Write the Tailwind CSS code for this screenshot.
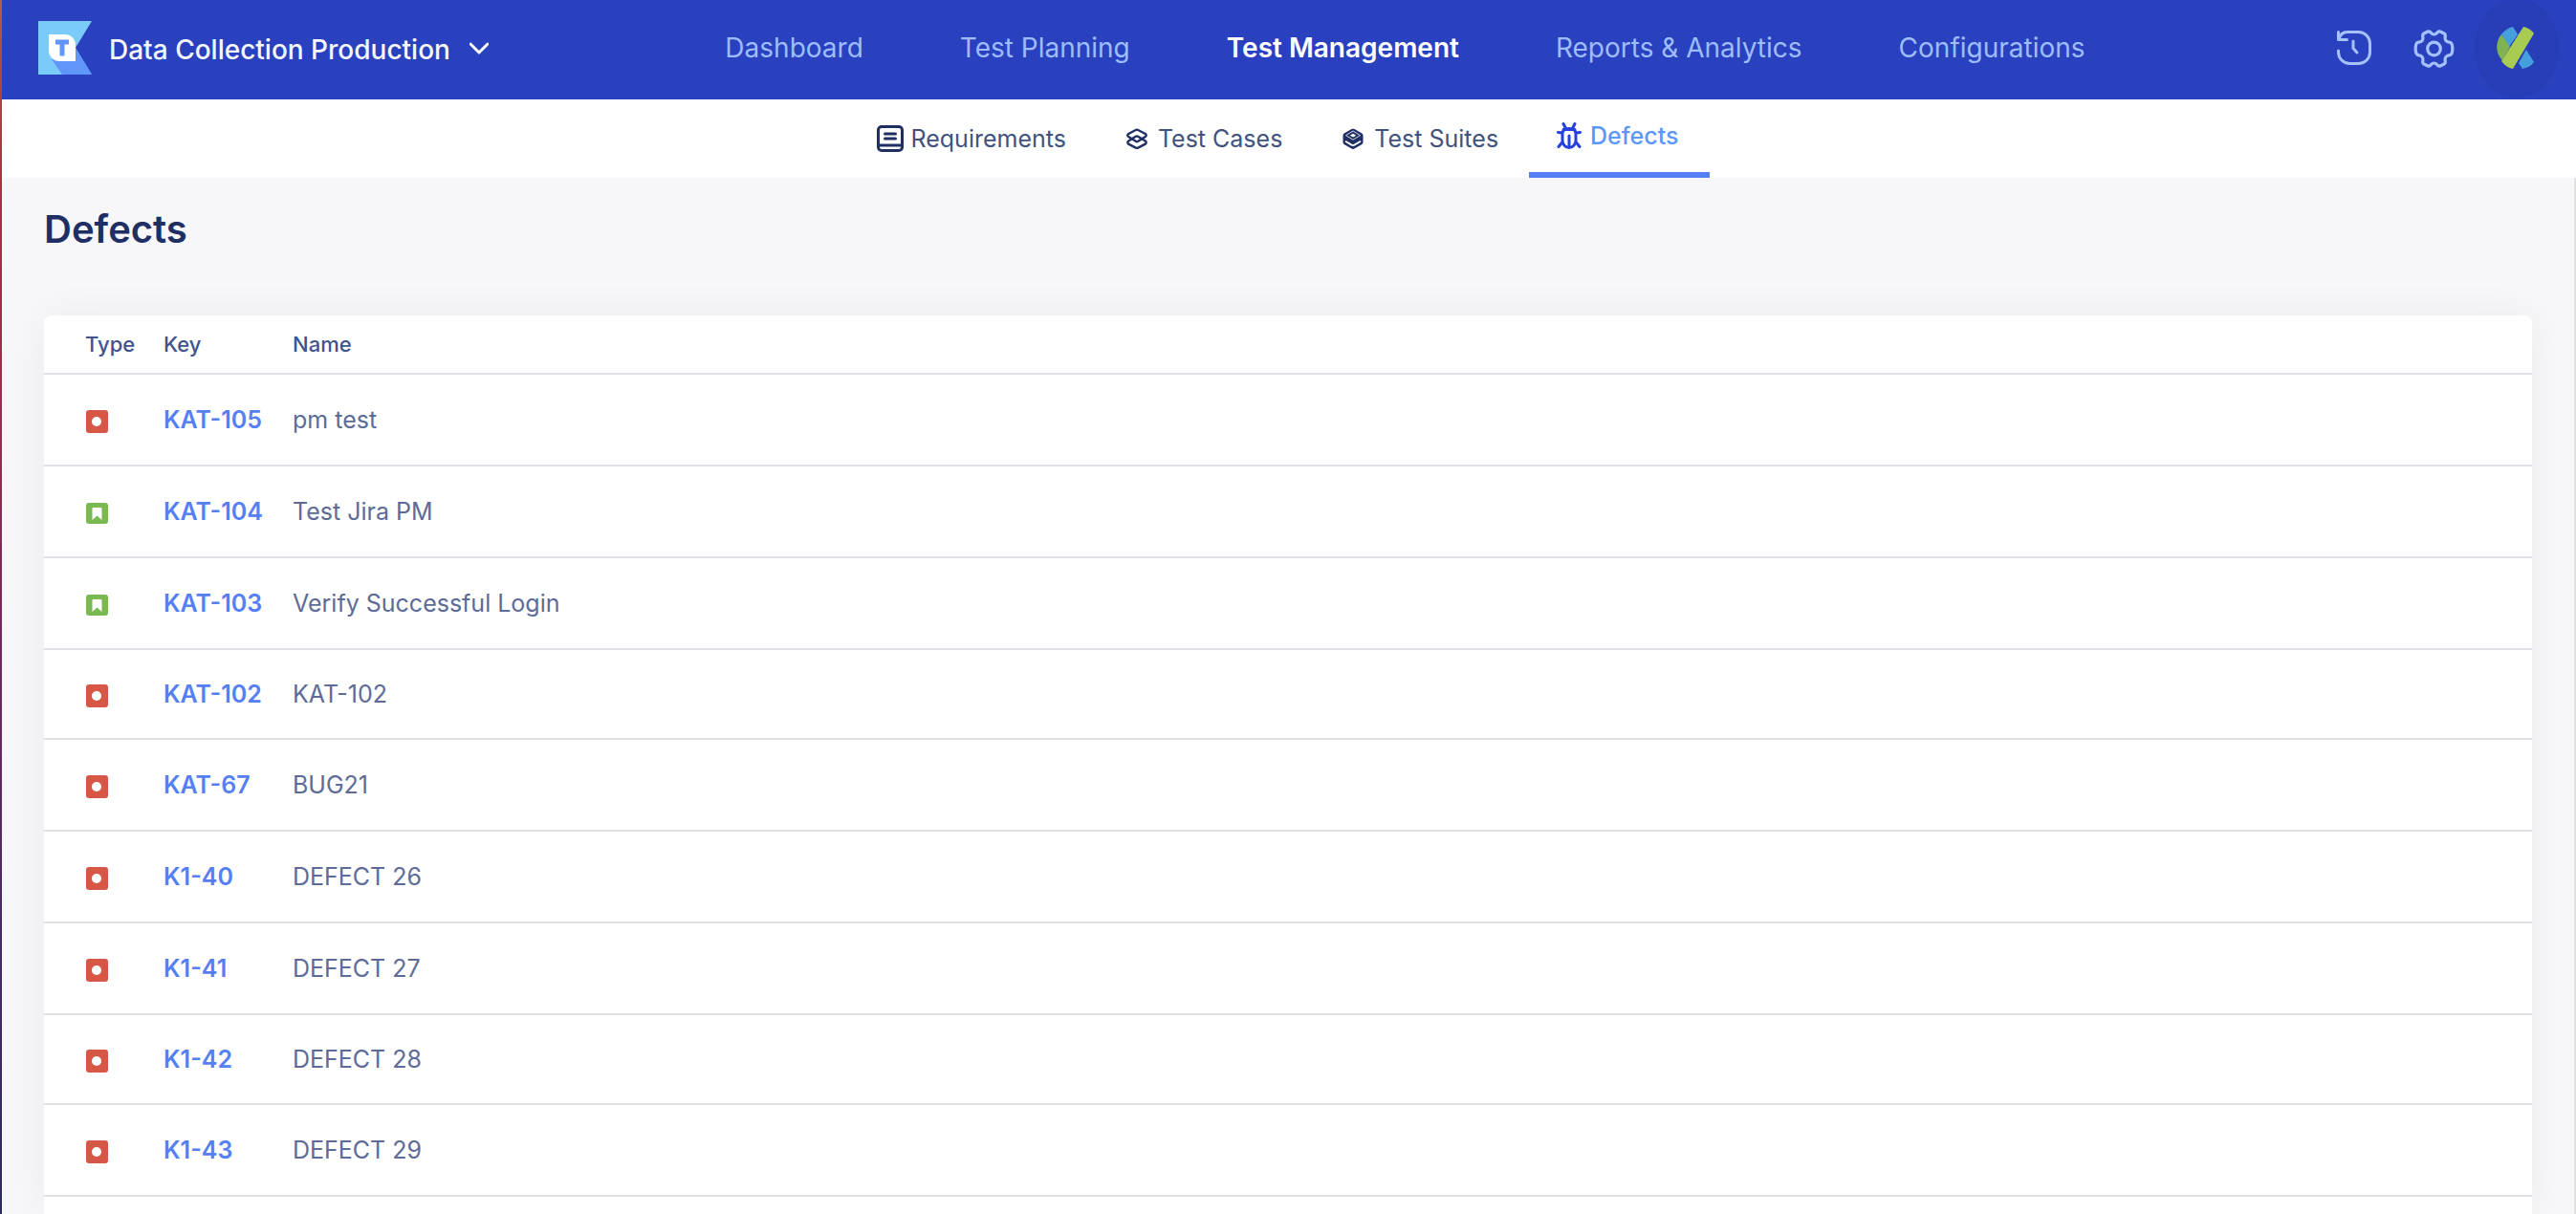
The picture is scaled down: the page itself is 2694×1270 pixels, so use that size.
<!DOCTYPE html>
<html lang="en">
<head>
<meta charset="utf-8">
<meta name="viewport" content="width=device-width, initial-scale=1">
<title>Defects</title>
<script src="https://cdn.jsdelivr.net/npm/@tailwindcss/browser@4"></script>
</head>
<body class="flex min-h-screen bg-[#f7f7fa] font-['Inter',sans-serif] antialiased">
<svg class="hidden" aria-hidden="true">
  <symbol id="bug" viewBox="0 0 24 24"><rect x="1" y="0" width="23" height="24" rx="3" fill="#d65745"/><circle cx="12" cy="12" r="5" fill="#fff"/></symbol>
  <symbol id="story" viewBox="0 0 24 24"><rect x="1" y="1" width="23" height="22" rx="3" fill="#7ab950"/><path d="M8.500 6h8a1 1 0 0 1 1 1v12l-5-4.500-5 4.500V7a1 1 0 0 1 1-1z" fill="#fff"/></symbol>
</svg>
<div class="w-[2px] shrink-0 bg-[linear-gradient(to_bottom,#b85a48_0%,#b04040_8%,#b32648_18%,#a02850_35%,#6f2a5c_52%,#4a2a60_75%,#2c2c58_100%)]"></div>
<div class="flex min-w-0 flex-1 flex-col">
  <header class="flex h-[104px] items-center bg-[#2940bf] pr-[18px] pb-1 pl-[38px]">
    <button type="button" class="flex items-center text-[28px] leading-[36px] font-medium text-[#f6f7fc]">
      <svg class="mr-[18px] h-14 w-14" viewBox="0 0 56 56" aria-hidden="true">
        <path d="M0 0h56L39 28l17 28H0z" fill="#7acbfa"/>
        <path d="M14 40l25-12 17 28H25z" fill="#6096fa"/>
        <path d="M11 14h17a11 11 0 0 1 11 11v17H22a11 11 0 0 1-11-11z" fill="#fff"/>
        <path d="M18 19.500h14v5h-4.500v12h-5v-12H18z" fill="#6096fa"/>
      </svg>
      <span class="pt-1">Data Collection Production</span>
      <svg class="ml-5 h-5 w-5" viewBox="0 0 20 20" fill="none" stroke="#fff" stroke-width="3" stroke-linecap="round" stroke-linejoin="round" aria-hidden="true"><path d="M1 6l9 9 9-9"/></svg>
    </button>
    <nav class="flex flex-1 justify-center gap-[101px] pr-4 text-[28px] leading-[36px] text-[#9dbdfb]" aria-label="Main">
      <a href="#">Dashboard</a>
      <a href="#">Test Planning</a>
      <a href="#" class="font-semibold text-white" aria-current="page">Test Management</a>
      <a href="#">Reports &amp; Analytics</a>
      <a href="#">Configurations</a>
    </nav>
    <div class="flex items-center">
      <button type="button" aria-label="History" class="mr-11">
        <svg class="h-9 w-9" viewBox="0 0 36 36" fill="none" stroke="#a5c2fc" stroke-width="3" stroke-linecap="round" stroke-linejoin="round"><path d="M1.500 1.500v8h9M2 9.500c1-5 4-8 9-8h11.500a12 12 0 0 1 12 12v9a12 12 0 0 1-12 12h-9a12 12 0 0 1-12-12V21"/><path d="M17 11v7.500l4 4.500"/></svg>
      </button>
      <button type="button" aria-label="Settings" class="mr-5">
        <svg class="h-11 w-11" viewBox="0 -1 44 44" fill="none" stroke="#a5c2fc" stroke-width="3.200" stroke-linecap="round" stroke-linejoin="round"><circle cx="21.500" cy="22" r="6.800"/><path d="M15 4c1.500-.4 2.500.2 3.500 1.500 1.600 2 4.400 2 6 0C25.500 4.200 26.500 3.600 28 4l4 2c1.400.8 1.600 2 1.200 3.600-.6 3 1 5.400 4 5.600 1.600.1 2.500.7 3 2.200.8 3 .8 6.200 0 9.200-.5 1.500-1.400 2.100-3 2.200-3 .2-4.600 2.600-4 5.600.4 1.600.2 2.800-1.200 3.600l-4 2c-1.500.4-2.500-.2-3.500-1.500-1.600-2-4.400-2-6 0-1 1.300-2 1.900-3.500 1.500l-4-2c-1.400-.8-1.600-2-1.200-3.600.6-3-1-5.400-4-5.600-1.600-.1-2.500-.7-3-2.200-.8-3-.8-6.200 0-9.200.5-1.500 1.400-2.100 3-2.200 3-.2 4.600-2.600 4-5.600C9.400 8 9.600 6.800 11 6z"/></svg>
      </button>
      <button type="button" aria-label="Account" class="flex h-[104px] w-[88px] items-center justify-center rounded-[50%] bg-[#273eb7]">
        <svg class="h-11 w-11" viewBox="1 0 44 44" aria-hidden="true">
          <path d="M7 8C10 4 14 1 19 0l5 8-9 13z" fill="#459fdd"/>
          <path d="M7 8l9 13L8 35C0 27 1 15 7 8z" fill="#7fb351"/>
          <path d="M30 0c5 1 9 4 11 7L19 44C14 43 10 40 7 36z" fill="#a8cb52"/>
          <path d="M33 24l8 13c-3 4-7 6-12 7l-4-6z" fill="#459fdd"/>
        </svg>
      </button>
    </div>
  </header>
  <nav class="flex h-[82px] justify-center bg-white pr-5 text-[25px] leading-[32px] text-[#41527c]" aria-label="Test management">
    <a href="#" class="flex items-center gap-2 pr-8 pl-7">
      <svg class="h-7 w-7" viewBox="0 0 28 28" fill="none" stroke="#1f2f63" aria-hidden="true"><rect x="1.500" y="1.500" width="25" height="25" rx="3.500" stroke-width="3"/><path d="M2 21h24" stroke-width="3"/><path d="M8.500 9h11M8.500 14h11" stroke-width="3" stroke-linecap="round"/></svg>
      <span>Requirements</span>
    </a>
    <a href="#" class="flex items-center gap-2 pr-8 pl-7">
      <svg class="h-7 w-7" viewBox="0 0 28 28" fill="none" stroke="#1f2f63" stroke-width="2.400" stroke-linejoin="round" aria-hidden="true"><path d="M12.800 5c.8-.4 1.600-.4 2.400 0l7.600 4c1.200.7 1.200 2.300 0 3l-7.600 4.800c-.8.500-1.600.5-2.400 0L5.200 12c-1.200-.7-1.200-2.300 0-3z"/><path d="M12.800 23.600c.8.400 1.600.4 2.400 0l7.600-4c1.200-.7 1.200-2.300 0-3l-7.600-4.800c-.8-.5-1.600-.5-2.400 0l-7.600 4.800c-1.200.7-1.200 2.300 0 3z"/></svg>
      <span>Test Cases</span>
    </a>
    <a href="#" class="flex items-center gap-2 pr-8 pl-7">
      <svg class="h-7 w-7" viewBox="0 0 28 28" fill="none" aria-hidden="true"><path d="M12.500 4c1-.5 2-.5 3 0l7 4c1.300.8 2 1.600 2 3v6.500c0 1.400-.7 2.300-2 3l-7 4c-1 .5-2 .5-3 0l-7-4c-1.300-.7-2-1.600-2-3V11c0-1.400.7-2.200 2-3z" fill="#1f2f63"/><path d="M14 6l7.500 4.600L14 15.200l-7.500-4.600z" stroke="#cdd3e6" stroke-width="1"/><path d="M14 8.800l3.200 1.900-3.200 1.900-3.200-1.900z" fill="#fff"/><path d="M6 16.800l6.500 3.800c1 .5 2 .5 3 0l6.500-3.800" stroke="#fff" stroke-width="1.800"/></svg>
      <span>Test Suites</span>
    </a>
    <a href="#" aria-current="page" class="flex items-center gap-2 border-b-[6px] border-[#5580f5] pr-8 pl-7 font-medium text-[#5c97fa]">
      <svg class="h-7 w-7" viewBox="0 0 28 28" fill="none" stroke="#2440de" stroke-width="3" stroke-linecap="round" stroke-linejoin="round" aria-hidden="true"><path d="M8 1.500l2.500 5M20 1.500l-2.500 5M8 7.500h12M7 12c0-3 2-5.500 7-5.500s7 2.500 7 5.500v7a7 7.500 0 0 1-14 0zM14 14v11M2.500 10.500L7 11M25.500 10.500L21 11M7 20.500l-4 5M21 20.500l4 5"/></svg>
      <span>Defects</span>
    </a>
  </nav>
  <main class="flex flex-1 flex-col border-r-2 border-[#e0e3e8] px-11">
    <h1 class="pt-7 pb-[64px] text-[40px] leading-[52px] font-semibold text-[#1f2f63]">Defects</h1>
    <section class="flex-1 rounded-t-lg bg-white shadow-[0_0_44px_rgba(20,25,45,0.05)]">
      <table class="w-full table-fixed border-separate border-spacing-0 text-left text-[25px] leading-[32px] text-[#5d6b96]">
        <colgroup><col class="w-[125px]"><col class="w-[135px]"><col></colgroup>
        <thead class="text-[22px] leading-[28px] text-[#42528c]">
          <tr class="h-[62px] *:border-b-2 *:border-[#dde1e6] *:font-medium">
            <th class="pl-[43px]">Type</th><th>Key</th><th>Name</th>
          </tr>
        </thead>
        <tbody id="rows"></tbody>
      </table>
    </section>
  </main>
</div>
<script>
const defects = [
  ['bug', 'KAT-105', 'pm test'],
  ['story', 'KAT-104', 'Test Jira PM'],
  ['story', 'KAT-103', 'Verify Successful Login'],
  ['bug', 'KAT-102', 'KAT-102'],
  ['bug', 'KAT-67', 'BUG21'],
  ['bug', 'K1-40', 'DEFECT 26'],
  ['bug', 'K1-41', 'DEFECT 27'],
  ['bug', 'K1-42', 'DEFECT 28'],
  ['bug', 'K1-43', 'DEFECT 29']
];
document.getElementById('rows').innerHTML = defects.map(([type, key, name]) => `
  <tr class="h-24 *:border-b-2 *:border-[#dde1e6] nth-[4n]:h-[94px]">
    <td class="pt-1 pl-[43px]"><svg class="h-6 w-6" role="img" aria-label="${type}"><use href="#${type}"/></svg></td>
    <td><a href="#" class="font-semibold text-[#5580f5]">${key}</a></td>
    <td>${name}</td>
  </tr>`).join('');
</script>
</body>
</html>
